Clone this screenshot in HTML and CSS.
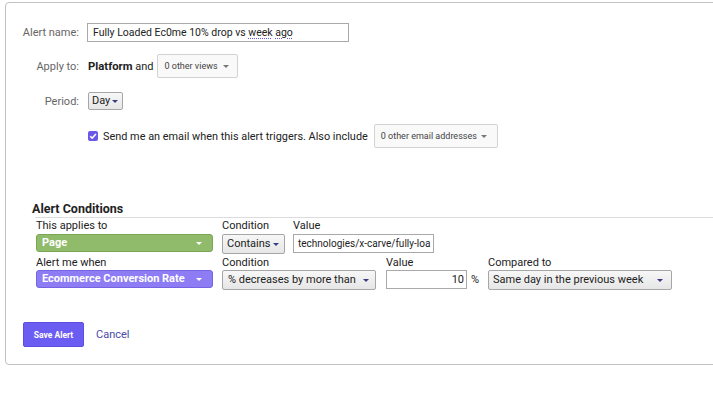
FILE: index.html
```html
<!DOCTYPE html>
<html>
<head>
<meta charset="utf-8">
<link rel="stylesheet" href="styles.css">
</head>
<body>
<div class="page">
<div class="card">
  <div class="form">
    <div class="frow r1">
      <div class="flabel">Alert name:</div>
      <div class="name-input">Fully Loaded Ec0me 10% drop vs <span class="spell">week</span> <span class="spell">ago</span></div>
    </div>
    <div class="frow r2">
      <div class="flabel">Apply to:</div>
      <div class="apply"><b>Platform</b> and</div>
      <div class="gsel views">0 other views<span class="caret grey"></span></div>
    </div>
    <div class="frow r3">
      <div class="flabel">Period:</div>
      <div class="dsel day">Day<span class="caret dark"></span></div>
    </div>
    <div class="frow r4">
      <span class="cbox"><svg width="10" height="10" viewBox="0 0 10 10"><path d="M2.2 5.2 L4.2 7.1 L7.9 3" fill="none" stroke="#fff" stroke-width="1.5"/></svg></span>
      <span class="email">Send me an email when this alert triggers. Also include</span>
      <div class="gsel emails">0 other email addresses<span class="caret grey"></span></div>
    </div>
  </div>

  <div class="cond">
    <div class="cond-title">Alert Conditions</div>
    <div class="cond-rule"></div>
    <div class="crow ra">
      <div class="ccol c1">
        <div class="clabel">This applies to</div>
        <div class="csel green">Page<span class="caret white"></span></div>
      </div>
      <div class="ccol c2a">
        <div class="clabel">Condition</div>
        <div class="dsel contains">Contains<span class="caret dark"></span></div>
      </div>
      <div class="ccol c3a">
        <div class="clabel">Value</div>
        <div class="tinput val1">technologies/x-carve/fully-loa</div>
      </div>
    </div>
    <div class="crow rb">
      <div class="ccol c1">
        <div class="clabel">Alert me when</div>
        <div class="csel purple">Ecommerce Conversion Rate<span class="caret white"></span></div>
      </div>
      <div class="ccol c2b">
        <div class="clabel">Condition</div>
        <div class="dsel decr">% decreases by more than<span class="caret dark"></span></div>
      </div>
      <div class="ccol c3b">
        <div class="clabel">Value</div>
        <div class="valwrap"><div class="tinput val2">10</div><span class="pct">%</span></div>
      </div>
      <div class="ccol c4b">
        <div class="clabel">Compared to</div>
        <div class="dsel compared">Same day in the previous week<span class="caret dark"></span></div>
      </div>
    </div>
  </div>

  <div class="actions">
    <button class="save">Save Alert</button>
    <span class="cancel">Cancel</span>
  </div>
</div>
</div>
</body>
</html>
```

FILE: styles.css
```css
html, body {
  margin: 0;
  padding: 0;
  background: #fff;
  font-family: Roboto, "Liberation Sans", Arial, sans-serif;
  color: #222;
}
.page {
  width: 713px;
  height: 404px;
  overflow: hidden;
}
.card {
  margin: 2px 0 0 5px;
  width: 760px;
  height: 363px;
  box-sizing: border-box;
  border: 1px solid #c2c2c2;
  border-radius: 4px;
  padding-top: 20px;
}
.frow {
  display: flex;
  align-items: center;
}
.flabel {
  width: 73px;
  text-align: right;
  font-size: 11px;
  color: #666;
  margin-right: 8px;
  flex: none;
}
.r1 { height: 19px; }
.r2 { height: 24px; margin-top: 12px; }
.r3 { height: 18px; margin-top: 14px; }
.r4 { height: 24px; margin-top: 14px; padding-left: 82px; }
.name-input {
  width: 262px;
  height: 19px;
  box-sizing: border-box;
  border: 1px solid #a9a9a9;
  font-size: 10.5px;
  line-height: 17px;
  padding-left: 5px;
  color: #222;
}
.spell {
  text-decoration: underline dotted #6a5ae0;
  text-underline-offset: 2px;
}
.apply {
  font-size: 11px;
  margin-left: 1px;
  margin-right: 4px;
}
.apply b { font-weight: 700; font-size: 11.3px; }
.gsel {
  position: relative;
  height: 24px;
  box-sizing: border-box;
  border: 1px solid #d2d2d2;
  border-radius: 2px;
  background: #f9f9f9;
  font-size: 9px;
  color: #444;
  line-height: 22px;
  padding-left: 6px;
}
.views { width: 81px; }
.emails { width: 124px; margin-left: 6px; }
.caret {
  position: absolute;
  width: 0;
  height: 0;
  border-left: 3px solid transparent;
  border-right: 3px solid transparent;
  border-top: 3px solid #777;
  top: 50%;
  margin-top: -1px;
}
.views .caret { right: 8px; }
.emails .caret { right: 10px; }
.caret.dark { border-top-color: #3a3a85; }
.caret.white { border-top-color: #fff; }
.dsel {
  position: relative;
  box-sizing: border-box;
  border: 1px solid #a6a6a6;
  border-radius: 2px;
  background: linear-gradient(#f7f7f7, #e6e6e6);
  font-size: 11px;
  color: #222;
  padding-left: 4px;
}
.day {
  width: 35px;
  height: 18px;
  line-height: 16px;
  margin-left: 1px;
  padding-left: 3px;
}
.day .caret { right: 4px; }
.cbox {
  width: 10px;
  height: 10px;
  border-radius: 2px;
  background: #6a58e6;
  display: inline-flex;
  margin-right: 5px;
}
.email {
  font-size: 10.9px;
  color: #222;
}
.cond {
  margin-top: 54px;
}
.cond-title {
  margin-left: 26px;
  font-size: 12.5px;
  font-weight: 700;
  line-height: 14px;
  color: #222;
}
.cond-rule {
  margin-left: 29px;
  margin-top: 1px;
  border-top: 1px solid #dcdcdc;
}
.crow {
  display: flex;
  margin-left: 30px;
}
.ccol { flex: none; }
.clabel {
  font-size: 11px;
  color: #222;
  line-height: 13px;
}
.ra { margin-top: 1px; }
.rb { margin-top: 2px; }
.ra .clabel { margin-bottom: 2px; }
.rb .clabel { margin-bottom: 1px; }
.c1 { width: 186px; }
.c2a { width: 71px; }
.c2b { width: 164px; }
.c3b { width: 102px; }
.csel {
  position: relative;
  width: 177px;
  height: 18px;
  box-sizing: border-box;
  border-radius: 3px;
  font-size: 11px;
  font-weight: 700;
  color: #fff;
  line-height: 16px;
  padding-left: 5px;
}
.csel .caret { right: 10px; }
.green { background: #8fbb6b; border: 1px solid #7aa656; }
.purple { background: #8d7cf4; border: 1px solid #7463e2; }
.contains {
  width: 63px;
  height: 20px;
  line-height: 18px;
}
.contains .caret { right: 5px; }
.tinput {
  box-sizing: border-box;
  border: 1px solid #a9a9a9;
  height: 19px;
  font-size: 10px;
  line-height: 17px;
  color: #222;
  overflow: hidden;
  white-space: nowrap;
}
.val1 {
  width: 141px;
  margin-top: 2px;
  padding-left: 4px;
}
.decr {
  width: 154px;
  height: 20px;
  line-height: 18px;
  padding-left: 5px;
}
.decr .caret { right: 6px; }
.valwrap {
  display: flex;
  align-items: center;
}
.val2 {
  width: 81px;
  height: 19px;
  text-align: right;
  padding-right: 2px;
  font-size: 11px;
}
.pct {
  font-size: 11px;
  margin-left: 4px;
  color: #222;
}
.compared {
  width: 184px;
  height: 20px;
  line-height: 18px;
  padding-left: 4px;
}
.compared .caret { right: 8px; }
.actions {
  display: flex;
  align-items: center;
  margin-top: 32px;
  margin-left: 17px;
}
.save {
  width: 61px;
  height: 25px;
  border: 1px solid #5d4ee0;
  border-radius: 2px;
  background: #6b5cf2;
  color: #fff;
  font-family: Roboto, "Liberation Sans", Arial, sans-serif;
  font-size: 8.5px;
  font-weight: 700;
  padding: 0;
}
.cancel {
  margin-left: 12px;
  font-size: 11px;
  color: #4b4ba6;
}
```
